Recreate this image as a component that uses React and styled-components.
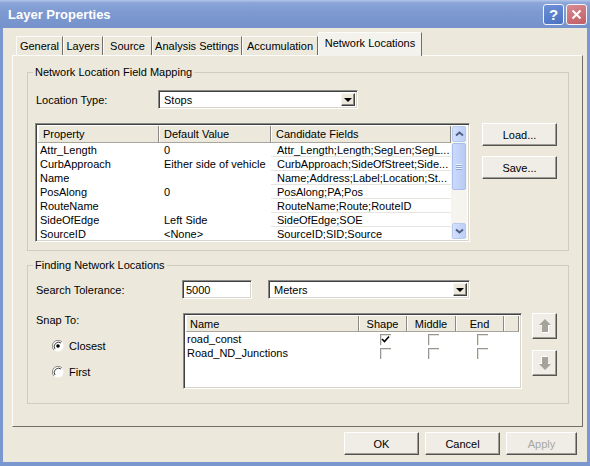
import React from 'react'
import styled, { createGlobalStyle } from 'styled-components'

const GlobalStyle = createGlobalStyle`
  html, body {
    margin: 0;
    padding: 0;
    background: #ffffff;
  }
  body {
    font-family: "Liberation Sans", Arial, sans-serif;
    font-size: 11px;
    color: #000;
  }
  * { box-sizing: border-box; }
`

const Window = styled.div`
  width: 590px;
  height: 466px;
  display: flex;
  flex-direction: column;
  overflow: hidden;
`
const TitleBar = styled.div`
  height: 28px;
  flex: none;
  display: flex;
  align-items: center;
  padding: 0 3px 0 8px;
  background: linear-gradient(180deg, #b3c6ea 0%, #8ba5d8 10%, #7d99d0 45%, #7692cc 100%);
`
const Title = styled.div`
  flex: 1;
  color: #fff;
  font-weight: bold;
  font-size: 13px;
`
const CapButton = styled.div`
  width: 21px;
  height: 21px;
  margin-left: 2px;
  border-radius: 3px;
  border: 1px solid #f2f4fa;
  background: ${p => (p.$close ? 'linear-gradient(160deg,#d98a91,#c05e66)' : 'linear-gradient(160deg,#6d90d6,#4a71c3)')};
  display: flex;
  align-items: center;
  justify-content: center;
  color: #fff;
  font-weight: bold;
  font-size: 15px;
`
const Frame = styled.div`
  flex: 1;
  display: flex;
  flex-direction: column;
  background: #ece9dc;
  border: 3px solid #7b97cf;
  border-top: none;
  border-bottom-width: 4px;
  padding: 0 4px 0 9px;
`
const TabRow = styled.div`
  height: 27px;
  flex: none;
  display: flex;
  align-items: flex-end;
  padding-left: 4px;
`
const Tab = styled.div`
  width: ${p => p.$w}px;
  height: ${p => (p.$active ? 24 : 19)}px;
  margin-bottom: ${p => (p.$active ? -1 : 0)}px;
  position: relative;
  z-index: ${p => (p.$active ? 2 : 1)};
  display: flex;
  align-items: center;
  justify-content: center;
  padding-bottom: ${p => (p.$active ? 4 : 0)}px;
  background: ${p => (p.$active ? '#f3f2ec' : '#ece9dc')};
  border-top: 1px solid #fbfbf8;
  border-left: 1px solid #fbfbf8;
  border-right: 1px solid #6f6e68;
  white-space: nowrap;
`
const Panel = styled.div`
  flex: 1;
  display: flex;
  flex-direction: column;
  border: 1px solid;
  border-color: #fcfcfa #6f6e68 #6f6e68 #fcfcfa;
  padding: 0 13px 0 14px;
`
const Group = styled.fieldset`
  margin: ${p => p.$top}px 0 0 0;
  padding: ${p => p.$pad};
  border: 1px solid #cfcdbf;
  min-width: 0;
`
const Legend = styled.legend`
  padding: 0 2px;
  margin-left: -3px;
  line-height: 13px;
`
const Row = styled.div`
  display: flex;
  align-items: ${p => p.$align || 'center'};
  margin-top: ${p => p.$top || 0}px;
`
const Label = styled.div`
  width: ${p => p.$w}px;
  flex: none;
`
const Sunken = styled.div`
  width: ${p => p.$w}px;
  height: ${p => p.$h}px;
  flex: none;
  margin-left: ${p => p.$ml || 0}px;
  border: 1px solid;
  border-color: #8a8a86 #ffffff #ffffff #8a8a86;
  box-shadow: inset 1px 1px #404040, inset -1px -1px #d8d6cc;
  background: #fff;
  padding: 2px;
  display: flex;
`
const FieldText = styled.div`
  flex: 1;
  padding-left: ${p => p.$pl ?? 3}px;
  display: flex;
  align-items: center;
`
const DropBtn = styled.div`
  width: 14px;
  flex: none;
  display: flex;
  align-items: center;
  justify-content: center;
  background: #ece9dc;
  border: 1px solid;
  border-color: #f6f6f2 #404040 #404040 #f6f6f2;
  box-shadow: inset -1px -1px #8a8a86;
`
const Tri = styled.span`
  width: 0;
  height: 0;
  border-left: 4px solid transparent;
  border-right: 4px solid transparent;
  border-top: 4px solid #000;
  margin-top: 1px;
`
const ButtonCol = styled.div`
  display: flex;
  flex-direction: column;
  gap: 10px;
  margin-left: 12px;
`
const PushButton = styled.div`
  width: ${p => p.$w || 75}px;
  height: ${p => p.$h || 23}px;
  display: flex;
  align-items: center;
  justify-content: center;
  background: #efede6;
  border: 1px solid;
  border-color: #ffffff #55544f #55544f #ffffff;
  box-shadow: inset -1px -1px #9d9c96;
  color: ${p => (p.$disabled ? '#a8a7a0' : '#000')};
`
const Grid = styled.div`
  flex: 1;
  display: grid;
  grid-template-columns: ${p => p.$cols};
  grid-auto-rows: 14px;
  grid-template-rows: ${p => p.$head}px;
  align-content: start;
  overflow: hidden;
`
const HeadCell = styled.div`
  display: flex;
  align-items: center;
  justify-content: ${p => (p.$center ? 'center' : 'flex-start')};
  padding-left: ${p => (p.$center ? 0 : p.$pl ?? 5)}px;
  background: #ece9dc;
  border-right: 1px solid #8b8a84;
  border-bottom: 1px solid #a9a79d;
  box-shadow: inset 1px 0 #fdfdfb;
  white-space: nowrap;
`
const Cell = styled.div`
  height: 14px;
  display: flex;
  align-items: center;
  justify-content: ${p => (p.$center ? 'center' : 'flex-start')};
  padding-left: ${p => (p.$center ? 0 : p.$pl ?? 2)}px;
  border-bottom: ${p => (p.$lined ? '1px solid #e6e5e0' : 'none')};
  white-space: nowrap;
  overflow: hidden;
`
const ScrollBar = styled.div`
  width: 16px;
  flex: none;
  display: flex;
  flex-direction: column;
  background: #f5f4ef;
  padding: 0 1px;
`
const ScrollBtn = styled.div`
  height: 16px;
  flex: none;
  border: 1px solid #b8c9ef;
  border-radius: 2px;
  background: linear-gradient(90deg, #d3e0fd, #bccff7);
  display: flex;
  align-items: center;
  justify-content: center;
`
const Thumb = styled.div`
  height: 47px;
  margin-top: 1px;
  border: 1px solid #a9bdea;
  border-radius: 2px;
  background: linear-gradient(90deg, #cbdafc, #b8cbf5);
  display: flex;
  flex-direction: column;
  align-items: center;
  justify-content: center;
  gap: 1px;
`
const Grip = styled.span`
  width: 6px;
  height: 1px;
  background: #eef3ff;
  box-shadow: 0 1px #8ea5d8;
`
const Fill = styled.div`
  flex: 1;
`
const Check = styled.span`
  width: 11px;
  height: 11px;
  margin-left: 4px;
  border-top: 1px solid #979791;
  border-left: 1px solid #979791;
  box-shadow: inset 1px 1px #e4e2da;
  display: flex;
  align-items: center;
  justify-content: center;
`
const SnapCol = styled.div`
  width: 147px;
  flex: none;
  display: flex;
  flex-direction: column;
`
const SnapLabel = styled.div`
  line-height: 14px;
`
const RadioRow = styled.div`
  display: flex;
  align-items: center;
  gap: 5px;
  padding-left: 16px;
  margin-top: ${p => p.$top}px;
`
const ArrowCol = styled.div`
  display: flex;
  flex-direction: column;
  gap: 11px;
  margin-left: 10px;
`
const Footer = styled.div`
  height: 35px;
  flex: none;
  display: flex;
  justify-content: flex-end;
  gap: 6px;
  padding: 5px 6px 0 0;
`

const Chevron = ({ down }) => (
  <svg width="9" height="6" viewBox="0 0 9 6">
    <path
      d={down ? 'M1 1.5 L4.5 4.5 L8 1.5' : 'M1 4.5 L4.5 1.5 L8 4.5'}
      stroke="#4d6185"
      strokeWidth="2"
      fill="none"
    />
  </svg>
)

const Radio = ({ on }) => (
  <svg width="12" height="12" viewBox="0 0 12 12">
    <circle cx="6" cy="6" r="5.5" fill="#fff" />
    <path d="M10 2 A5.5 5.5 0 0 0 2 10" stroke="#8a8a86" fill="none" />
    <path d="M9 3 A4.3 4.3 0 0 0 3 9" stroke="#404040" fill="none" />
    {on && <circle cx="6" cy="6" r="1.8" fill="#000" />}
  </svg>
)

const BigArrow = ({ down }) => (
  <svg width="14" height="16" viewBox="0 0 14 16">
    <g transform={down ? 'rotate(180 7 8)' : undefined}>
      <path d="M8 2 L14 8 L11 8 L11 15 L5 15 L5 8 L2 8 Z" fill="#fff" />
      <path d="M7 1 L13 7 L10 7 L10 14 L4 14 L4 7 L1 7 Z" fill="#a4a39c" />
    </g>
  </svg>
)

const CheckMark = () => (
  <svg width="9" height="9" viewBox="0 0 9 9">
    <path d="M1 4 L3.5 6.5 L8 1.5" stroke="#000" strokeWidth="1.6" fill="none" />
  </svg>
)

const tabs = [
  { name: 'General', w: 47 },
  { name: 'Layers', w: 40 },
  { name: 'Source', w: 49 },
  { name: 'Analysis Settings', w: 90 },
  { name: 'Accumulation', w: 76 },
  { name: 'Network Locations', w: 104, active: true },
]

const props = [
  ['Attr_Length', '0', 'Attr_Length;Length;SegLen;SegL...'],
  ['CurbApproach', 'Either side of vehicle', 'CurbApproach;SideOfStreet;Side...'],
  ['Name', '', 'Name;Address;Label;Location;St...'],
  ['PosAlong', '0', 'PosAlong;PA;Pos'],
  ['RouteName', '', 'RouteName;Route;RouteID'],
  ['SideOfEdge', 'Left Side', 'SideOfEdge;SOE'],
  ['SourceID', '<None>', 'SourceID;SID;Source'],
]

const sources = [
  { name: 'road_const', shape: true },
  { name: 'Road_ND_Junctions', shape: false },
]

export default function App() {
  return (
    <Window>
      <GlobalStyle />
      <TitleBar>
        <Title>Layer Properties</Title>
        <CapButton>?</CapButton>
        <CapButton $close>
          <svg width="11" height="11" viewBox="0 0 11 11">
            <path d="M1.5 1.5 L9.5 9.5 M9.5 1.5 L1.5 9.5" stroke="#fff" strokeWidth="2" />
          </svg>
        </CapButton>
      </TitleBar>
      <Frame>
        <TabRow>
          {tabs.map(t => (
            <Tab key={t.name} $w={t.w} $active={t.active}>
              {t.name}
            </Tab>
          ))}
        </TabRow>
        <Panel>
          <Group $top={10} $pad="11px 10px 8px 8px">
            <Legend>Network Location Field Mapping</Legend>
            <Row>
              <Label $w={122}>Location Type:</Label>
              <Sunken $w={200} $h={19}>
                <FieldText>Stops</FieldText>
                <DropBtn>
                  <Tri />
                </DropBtn>
              </Sunken>
            </Row>
            <Row $top={14} $align="flex-start">
              <Sunken $w={435} $h={119} $ml={-1}>
                <Grid $cols="121px 112px 1fr" $head={17}>
                  <HeadCell>Property</HeadCell>
                  <HeadCell>Default Value</HeadCell>
                  <HeadCell>Candidate Fields</HeadCell>
                  {props.map(r => (
                    <React.Fragment key={r[0]}>
                      <Cell>{r[0]}</Cell>
                      <Cell $pl={5}>{r[1]}</Cell>
                      <Cell $pl={6} $lined>{r[2]}</Cell>
                    </React.Fragment>
                  ))}
                </Grid>
                <ScrollBar>
                  <ScrollBtn>
                    <Chevron />
                  </ScrollBtn>
                  <Thumb>
                    <Grip />
                    <Grip />
                    <Grip />
                  </Thumb>
                  <Fill />
                  <ScrollBtn>
                    <Chevron down />
                  </ScrollBtn>
                </ScrollBar>
              </Sunken>
              <ButtonCol>
                <PushButton>Load...</PushButton>
                <PushButton>Save...</PushButton>
              </ButtonCol>
            </Row>
          </Group>
          <Group $top={8} $pad="8px 10px 14px 8px">
            <Legend>Finding Network Locations</Legend>
            <Row>
              <Label $w={146}>Search Tolerance:</Label>
              <Sunken $w={70} $h={19}>
                <FieldText $pl={1}>5000</FieldText>
              </Sunken>
              <Sunken $w={202} $h={19} $ml={16}>
                <FieldText>Meters</FieldText>
                <DropBtn>
                  <Tri />
                </DropBtn>
              </Sunken>
            </Row>
            <Row $top={14} $align="flex-start">
              <SnapCol>
                <SnapLabel>Snap To:</SnapLabel>
                <RadioRow $top={13}>
                  <Radio on />
                  Closest
                </RadioRow>
                <RadioRow $top={14}>
                  <Radio />
                  First
                </RadioRow>
              </SnapCol>
              <Sunken $w={339} $h={76}>
                <Grid $cols="173px 48px 49px 48px 1fr" $head={16}>
                  <HeadCell $pl={4}>Name</HeadCell>
                  <HeadCell $center>Shape</HeadCell>
                  <HeadCell $center>Middle</HeadCell>
                  <HeadCell $center>End</HeadCell>
                  <HeadCell />
                  {sources.map(s => (
                    <React.Fragment key={s.name}>
                      <Cell $pl={1}>{s.name}</Cell>
                      <Cell $center>
                        <Check>{s.shape && <CheckMark />}</Check>
                      </Cell>
                      <Cell $center>
                        <Check />
                      </Cell>
                      <Cell $center>
                        <Check />
                      </Cell>
                      <Cell />
                    </React.Fragment>
                  ))}
                </Grid>
              </Sunken>
              <ArrowCol>
                <PushButton $w={25} $h={26}>
                  <BigArrow />
                </PushButton>
                <PushButton $w={25} $h={26}>
                  <BigArrow down />
                </PushButton>
              </ArrowCol>
            </Row>
          </Group>
        </Panel>
        <Footer>
          <PushButton>OK</PushButton>
          <PushButton>Cancel</PushButton>
          <PushButton $w={71} $disabled>
            Apply
          </PushButton>
        </Footer>
      </Frame>
    </Window>
  )
}
